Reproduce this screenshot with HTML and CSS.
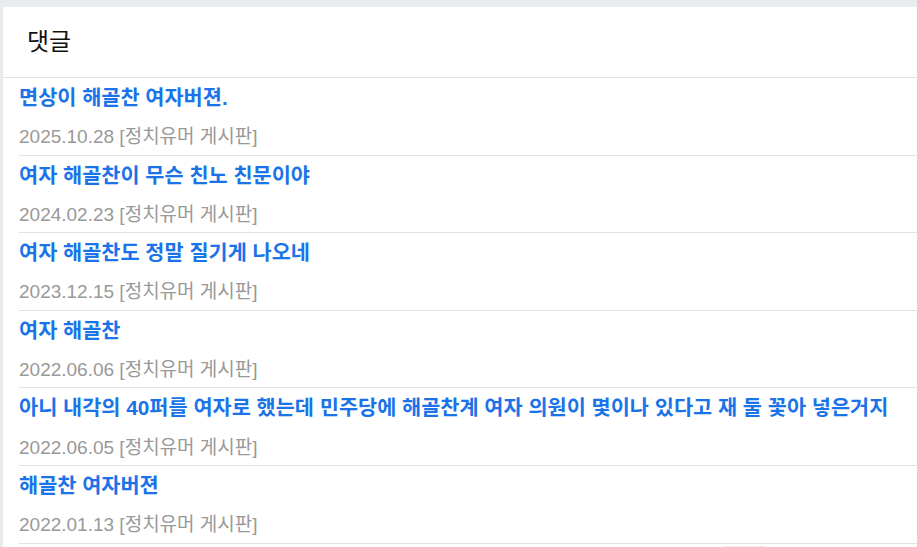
FILE: index.html
```html
<!DOCTYPE html>
<html lang="ko">
<head>
    <meta charset="UTF-8">
    <meta name="viewport" content="width=device-width, initial-scale=1.0">
    <title>댓글</title>
    <link rel="stylesheet" href="styles.css">
</head>
<body>

<div class="comment-box">
    <div class="comment-header">댓글</div>

    <ul class="comment-list">
        <li class="comment-item">
            <a class="comment-title" href="#">면상이 해골찬 여자버젼.</a>
            <div class="comment-meta">2025.10.28 [정치유머 게시판]</div>
        </li>
        <li class="comment-item">
            <a class="comment-title" href="#">여자 해골찬이 무슨 친노 친문이야</a>
            <div class="comment-meta">2024.02.23 [정치유머 게시판]</div>
        </li>
        <li class="comment-item">
            <a class="comment-title" href="#">여자 해골찬도 정말 질기게 나오네</a>
            <div class="comment-meta">2023.12.15 [정치유머 게시판]</div>
        </li>
        <li class="comment-item">
            <a class="comment-title" href="#">여자 해골찬</a>
            <div class="comment-meta">2022.06.06 [정치유머 게시판]</div>
        </li>
        <li class="comment-item">
            <a class="comment-title" href="#">아니 내각의 40퍼를 여자로 했는데 민주당에 해골찬계 여자 의원이 몇이나 있다고 재 둘 꽃아 넣은거지</a>
            <div class="comment-meta">2022.06.05 [정치유머 게시판]</div>
        </li>
        <li class="comment-item">
            <a class="comment-title" href="#">해골찬 여자버젼</a>
            <div class="comment-meta">2022.01.13 [정치유머 게시판]</div>
        </li>
    </ul>

    <div class="pager-hint"></div>
</div>

</body>
</html>
```

FILE: styles.css
```css
body {
    margin: 0;
    padding: 7px 0 0 3px;
    background-color: #e9ecef;
    font-family: 'Liberation Sans', 'Noto Sans CJK KR', sans-serif;
    overflow: hidden;
}

.comment-box {
    background: #fff;
    min-height: 540px;
}

.comment-header {
    height: 70px;
    line-height: 70px;
    padding-left: 24px;
    font-size: 24px;
    color: #111;
    border-bottom: 1px solid #e3e3e3;
}

.comment-list {
    list-style: none;
    margin: 0;
    padding: 0 0 0 16px;
}

.comment-item {
    border-bottom: 1px solid #e3e3e3;
}

.comment-title {
    display: block;
    height: 40.3px;
    line-height: 40.3px;
    font-size: 20.8px;
    font-weight: bold;
    color: #1a73e8;
    text-decoration: none;
    white-space: nowrap;
}

.comment-meta {
    height: 36.3px;
    line-height: 38.3px;
    font-size: 19px;
    color: #999;
}

.pager-hint {
    width: 41px;
    height: 2px;
    margin: 2px 0 0 721px;
    background: #ececec;
}
```
